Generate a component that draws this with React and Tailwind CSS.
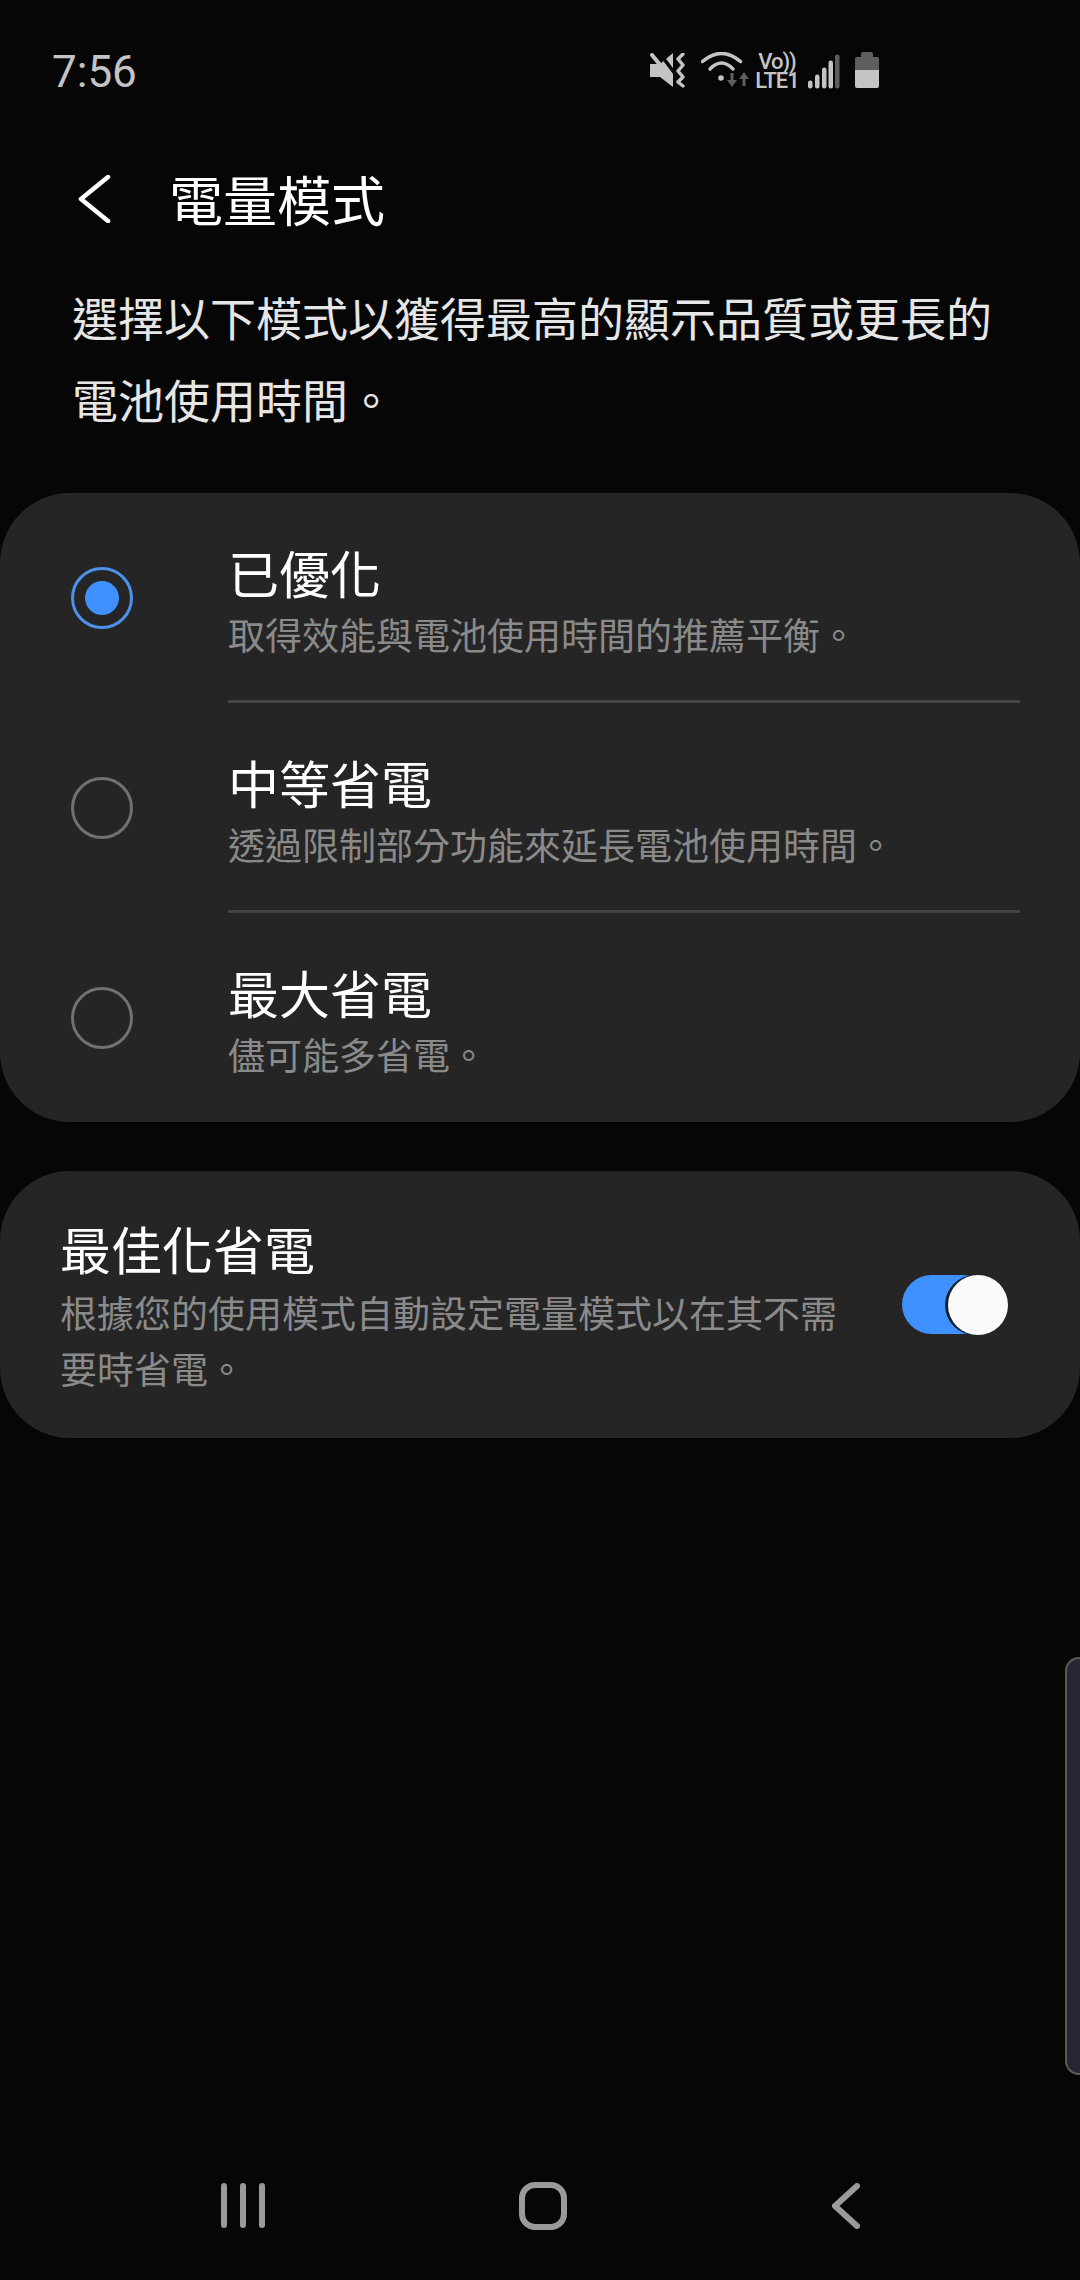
const modes = [
  { title: '已優化', sub: '取得效能與電池使用時間的推薦平衡。', on: true },
  { title: '中等省電', sub: '透過限制部分功能來延長電池使用時間。' },
  { title: '最大省電', sub: '儘可能多省電。' },
];

function StatusIcons() {
  return (
    <div className="ml-auto mr-[201px] flex items-center h-[40px] text-[#c4c4c4]">
      {/* muted speaker with vibrate wave */}
      <svg width="36" height="36" viewBox="0 0 36 36" fill="none">
        <path d="M0 11h10L23 0v34L10 24H0z" fill="#c4c4c4" />
        <path d="M8 -2L26 22" stroke="#060606" strokeWidth="3.500" />
        <path d="M2 2L16 19" stroke="#c4c4c4" strokeWidth="4" strokeLinecap="round" />
        <path d="M33 1l-5 5 5 6-5 6 5 6-5 5 5 4" stroke="#c4c4c4" strokeWidth="3.500" strokeLinecap="round" strokeLinejoin="round" />
      </svg>
      {/* wifi */}
      <svg className="ml-[15px]" width="48" height="38" viewBox="0 0 48 38" fill="none">
        <path d="M1.500 9.500Q20.500 -6.500 39.500 9.500" stroke="#c4c4c4" strokeWidth="3.500" strokeLinecap="round" />
        <path d="M9 17Q20.500 5 32 17" stroke="#c4c4c4" strokeWidth="3.500" strokeLinecap="round" />
        <circle cx="20" cy="26" r="2.800" fill="#c4c4c4" />
        <path d="M31 21v9" stroke="#5e5e5e" strokeWidth="3" />
        <path d="M26 28h10l-5 7z" fill="#5e5e5e" />
        <path d="M43 34v-9" stroke="#5e5e5e" strokeWidth="3" />
        <path d="M38 27h10l-5-7z" fill="#5e5e5e" />
      </svg>
      <div className="ml-[4px] w-[48px] text-center whitespace-pre-line font-['Roboto',sans-serif] font-medium text-[22px] leading-[19px] tracking-[-1px]">
        {'Vo))\nLTE1'}
      </div>
      {/* signal */}
      <svg className="ml-[7px]" width="32" height="35" viewBox="0 0 32 35">
        <rect x="0" y="26.500" width="4.500" height="8" rx="2.200" fill="#c4c4c4" />
        <rect x="7" y="20.500" width="4.500" height="14" rx="2.200" fill="#c4c4c4" />
        <rect x="14" y="13.500" width="4.500" height="21" rx="2.200" fill="#c4c4c4" />
        <rect x="20.500" y="6.500" width="4.500" height="28" rx="2.200" fill="#c4c4c4" />
        <rect x="27" y="0.500" width="4.500" height="34" rx="2.200" fill="#5e5e5e" />
      </svg>
      {/* battery */}
      <svg className="ml-[15px] -mt-[2px]" width="24" height="36" viewBox="0 0 24 36">
        <path d="M6 5V2a2 2 0 0 1 2-2h8a2 2 0 0 1 2 2v3h4a2 2 0 0 1 2 2v11H0V7a2 2 0 0 1 2-2z" fill="#5e5e5e" />
        <path d="M0 18h24v16a2 2 0 0 1-2 2H2a2 2 0 0 1-2-2z" fill="#c4c4c4" />
      </svg>
    </div>
  );
}

function Radio({ on }) {
  return (
    <div className={`w-[62px] h-[62px] rounded-full border-[3px] flex items-center justify-center shrink-0 ${on ? 'border-[#4a92ea]' : 'border-[#717171]'}`}>
      {on && <div className="w-[34px] h-[34px] rounded-full bg-[#3e91ff]" />}
    </div>
  );
}

function ModeRow({ mode, last }) {
  return (
    <div className="h-[210px] flex items-center pl-[71px]">
      <Radio on={mode.on} />
      <div className="ml-[95px] flex-1 h-full pr-[60px]">
        <div className={`h-full pt-[47px] ${last ? '' : 'border-b-[3px] border-[#444444]'}`}>
          <div className="text-[51px] leading-[64px] text-white">{mode.title}</div>
          <div className="text-[37px] leading-[60px] text-[#8a8a8a]">{mode.sub}</div>
        </div>
      </div>
    </div>
  );
}

export default function App() {
  return (
    <div className="relative w-[1080px] h-[2280px] overflow-hidden bg-[#060606] flex flex-col font-['Noto_Sans_CJK_TC',sans-serif]">
      <div className="flex items-center pl-[52px] pt-[50px] h-[92px]">
        <span className="font-['Roboto',sans-serif] text-[44px] leading-[44px] mt-[2px] text-[#c4c4c4]">7:56</span>
        <StatusIcons />
      </div>

      <div className="flex items-center h-[80px] mt-[67px] pl-[77px]">
        <svg width="34" height="48" viewBox="0 0 34 48" fill="none">
          <path d="M31 2L4 24l27 22" stroke="#ffffff" strokeWidth="4.500" strokeLinecap="round" strokeLinejoin="round" />
        </svg>
        <h1 className="ml-[58px] text-[54px] leading-[80px] text-white">電量模式</h1>
      </div>

      <p className="mt-[36px] px-[72px] text-[46px] leading-[82px] text-[#e6e6e6]">
        選擇以下模式以獲得最高的顯示品質或更長的電池使用時間。
      </p>

      <div className="mt-[54px] h-[629px] rounded-[70px] bg-[#252525]">
        {modes.map((m, i) => (
          <ModeRow key={m.title} mode={m} last={i === modes.length - 1} />
        ))}
      </div>

      <div className="mt-[49px] h-[267px] rounded-[70px] bg-[#252525] flex items-center pl-[60px] pr-[72px]">
        <div className="w-[800px]">
          <div className="text-[51px] leading-[66px] pt-[2px] text-white">最佳化省電</div>
          <div className="mt-[3px] text-[37px] leading-[56px] text-[#8a8a8a] w-[790px]">
            根據您的使用模式自動設定電量模式以在其不需要時省電。
          </div>
        </div>
        <div className="relative ml-auto w-[106px] h-[59px]">
          <div className="absolute left-0 top-0 w-[90px] h-[59px] rounded-full bg-[#3e91ff]" />
          <div className="absolute left-[43px] top-0 w-[60px] h-[60px] rounded-full bg-[#14202e]" />
          <div className="absolute left-[46px] top-0 w-[60px] h-[60px] rounded-full bg-[#fafafa]" />
        </div>
      </div>

      <div className="mt-auto h-[97px] flex items-start">
        <div className="ml-[221px] flex gap-[13px]">
          <div className="w-[6px] h-[45px] rounded-full bg-[#9a9a9a]" />
          <div className="w-[6px] h-[45px] rounded-full bg-[#9a9a9a]" />
          <div className="w-[6px] h-[45px] rounded-full bg-[#9a9a9a]" />
        </div>
        <div className="ml-[254px] -mt-px w-[48px] h-[48px] rounded-[16px] border-[6px] border-[#9a9a9a]" />
        <svg className="ml-[264px]" width="30" height="46" viewBox="0 0 30 46" fill="none">
          <path d="M26 3L4 23l22 20" stroke="#9a9a9a" strokeWidth="6" strokeLinecap="round" strokeLinejoin="round" />
        </svg>
      </div>

      {/* edge panel handle */}
      <div className="absolute right-0 top-[1657px] w-[15px] h-[418px] rounded-l-[14px] bg-[#282632] border-2 border-r-0 border-[#5a5a5a]" />
    </div>
  );
}
